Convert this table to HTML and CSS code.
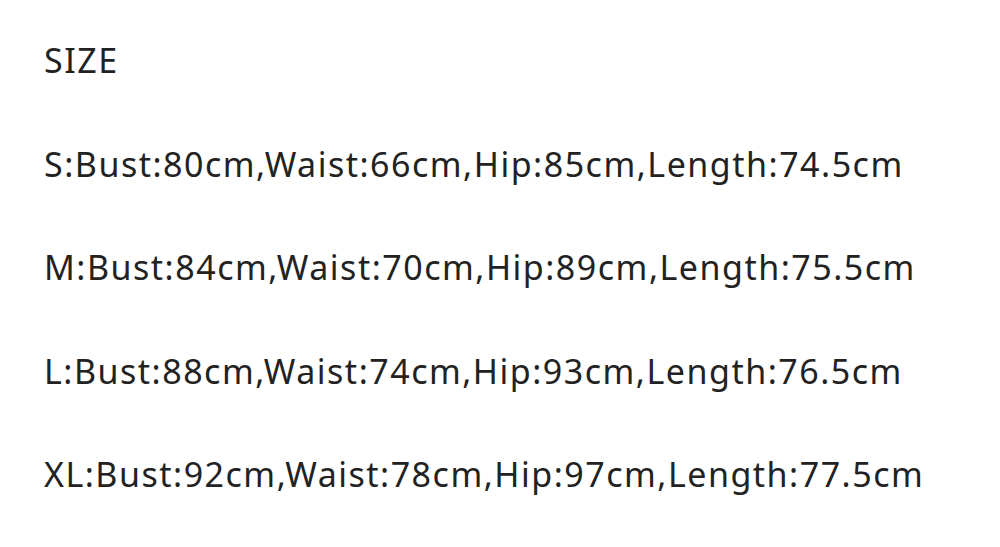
FILE: index.html
```html
<!DOCTYPE html>
<html lang="en">
<head>
  <meta charset="UTF-8">
  <meta name="viewport" content="width=device-width, initial-scale=1.0">
  <title>Size</title>
  <link rel="stylesheet" href="styles.css">
</head>
<body>
  <div class="size-info">
    <p class="line">SIZE</p>
    <p class="line">S:Bust:80cm,Waist:66cm,Hip:85cm,Length:74.5cm</p>
    <p class="line">M:Bust:84cm,Waist:70cm,Hip:89cm,Length:75.5cm</p>
    <p class="line">L:Bust:88cm,Waist:74cm,Hip:93cm,Length:76.5cm</p>
    <p class="line">XL:Bust:92cm,Waist:78cm,Hip:97cm,Length:77.5cm</p>
  </div>
</body>
</html>
```

FILE: styles.css
```css
body {
  margin: 0;
  background: #fff;
  font-family: "Noto Sans", sans-serif;
  color: #222;
}
.size-info {
  padding: 9px 0 0 44px;
}
.line {
  margin: 0;
  font-size: 34px;
  line-height: 103.5px;
  height: 103.5px;
  letter-spacing: 1.5px;
}
```
